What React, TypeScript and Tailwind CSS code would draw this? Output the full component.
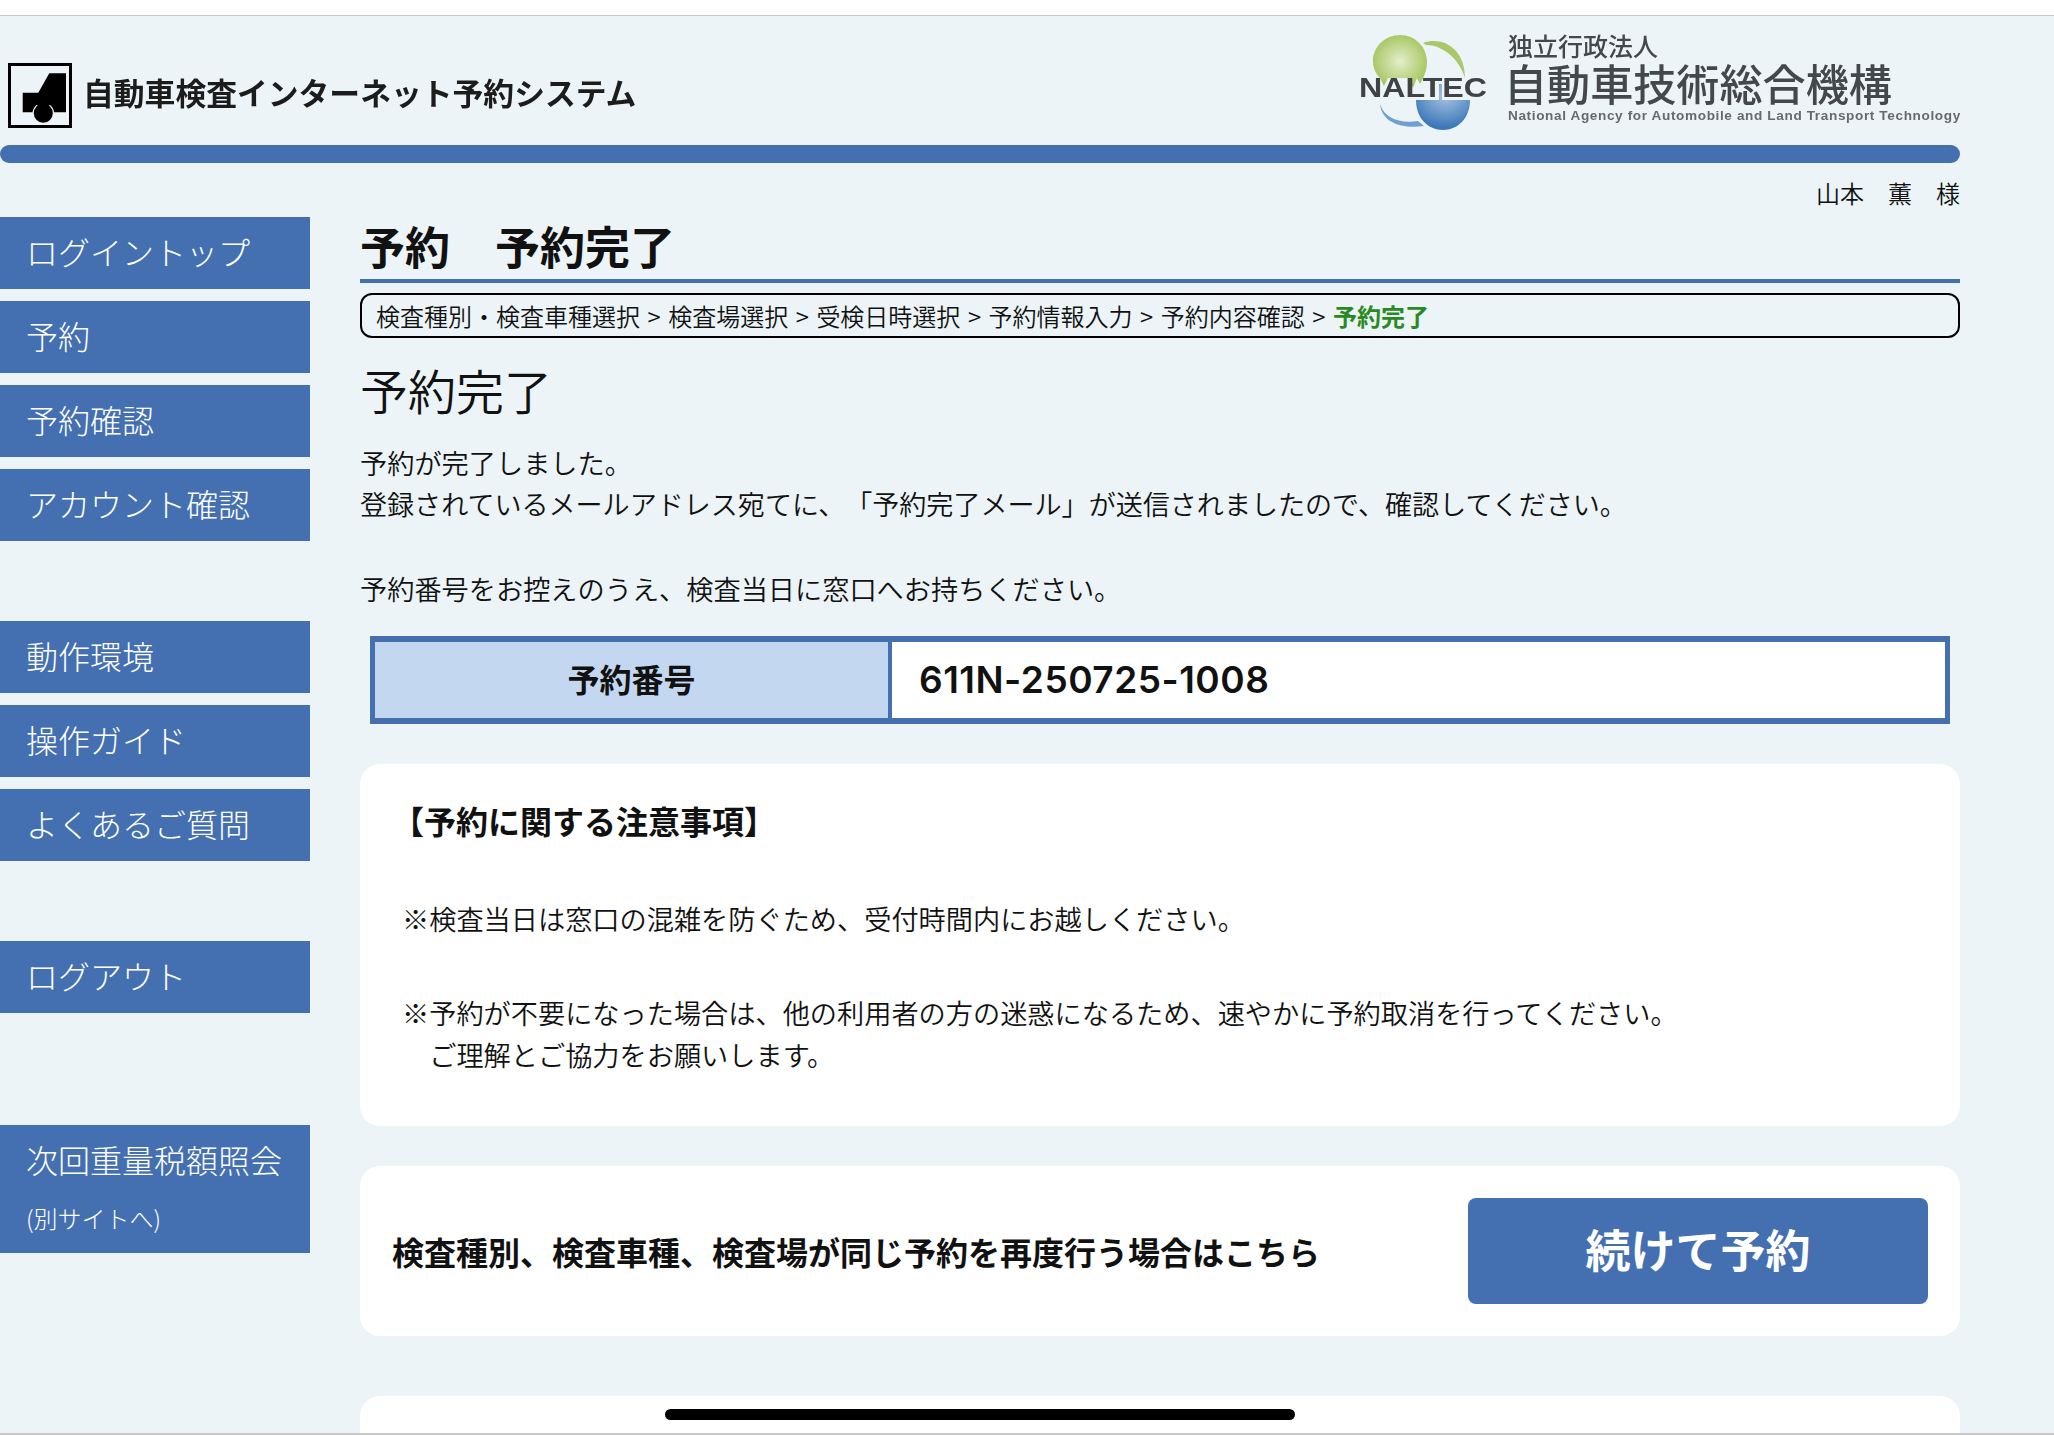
const navGroups = [
  { className: "", items: ["ログイントップ", "予約", "予約確認", "アカウント確認"] },
  { className: "mt-[80px]", items: ["動作環境", "操作ガイド", "よくあるご質問"] },
  { className: "mt-[80px]", items: ["ログアウト"] },
];

function TruckIcon() {
  return (
    <div className="h-[65px] w-[64px] shrink-0 border-[3px] border-black">
      <svg viewBox="0 0 58 59" className="h-[59px] w-[58px]">
        <path d="M38.3 7.3H55V46.3H11.7V26.7H27.3Z" fill="#000" />
        <circle cx="32.3" cy="47.3" r="10.8" fill="#ecf4f7" />
        <circle cx="32.3" cy="47.3" r="9.5" fill="#000" />
        <path d="M25 38L32.3 35L39.6 38L36 42H28.6Z" fill="#000" />
      </svg>
    </div>
  );
}

function NaltecLogo() {
  return (
    <svg viewBox="0 0 150 110" className="h-[110px] w-[150px] shrink-0 blur-[0.5px]">
      <defs>
        <radialGradient id="green" cx="50%" cy="50%" r="55%">
          <stop offset="0%" stopColor="#e4eecb" />
          <stop offset="100%" stopColor="#a3c45c" />
        </radialGradient>
        <radialGradient id="blue" cx="55%" cy="25%" r="70%">
          <stop offset="0%" stopColor="#a9c3e3" />
          <stop offset="100%" stopColor="#3b77b8" />
        </radialGradient>
      </defs>
      <path d="M50 7C65 7 77 19 77 34C77 44 73 50 70 56L67 50L63 60L58 50H38L34 58L30 50C26 46 23 40 23 33C23 19 35 7 50 7Z" fill="url(#green)" />
      <path d="M73 15C92 8 115 20 115 50C109 30 92 17 76 17Z" fill="#a9c869" />
      <path d="M66 72H120C120 90 108 102 93 102C78 102 66 90 66 72ZM89 56H92V72H89Z" fill="url(#blue)" />
      <path d="M30 76C34 90 50 96 68 93L74 98C54 101 32 96 30 76Z" fill="#6f9fd0" />
      <text x="9" y="69" fontFamily="Liberation Sans, sans-serif" fontWeight="700" fontSize="28" fill="#3f4346" textLength="128" lengthAdjust="spacingAndGlyphs">NALTEC</text>
    </svg>
  );
}

function Header() {
  return (
    <div className="flex h-[129px] w-[1960px] justify-between">
      <div className="mt-[47px] flex h-[65px] items-center pl-2">
        <TruckIcon />
        <div className="mb-[7px] ml-[11px] text-[30.8px] leading-[40px] font-bold whitespace-nowrap text-[#1c1c1c] blur-[0.3px]">
          自動車検査インターネット予約システム
        </div>
      </div>
      <div className="mt-[12px] flex">
        <NaltecLogo />
        <div className="ml-[8px] flex w-[452px] flex-col text-[#45484a] blur-[0.5px]">
          <div className="mt-[3px] text-[25px] leading-[28px] font-medium">独立行政法人</div>
          <div className="mt-[-1px] -ml-[4px] text-[43.1px] leading-[48px] font-medium whitespace-nowrap">自動車技術総合機構</div>
          <div className="mt-[2px] text-[13.6px] leading-[16px] font-bold tracking-[0.62px] whitespace-nowrap text-[#666a6d] font-['Liberation_Sans',sans-serif]">
            National Agency for Automobile and Land Transport Technology
          </div>
        </div>
      </div>
    </div>
  );
}

function NavItem({ label }: { label: string }) {
  return (
    <div className="flex h-[72px] items-center bg-[#4470b1] pb-[5px] pl-[26px] text-[32px] font-light text-white">
      {label}
    </div>
  );
}

function Sidebar() {
  return (
    <div className="mt-[54px] w-[310px] shrink-0">
      {navGroups.map((group, i) => (
        <div key={i} className={`flex flex-col gap-[12px] ${group.className}`}>
          {group.items.map((item) => (
            <NavItem key={item} label={item} />
          ))}
        </div>
      ))}
      <div className="mt-[112px] flex h-[128px] flex-col bg-[#4470b1] pl-[26px] font-light text-white">
        <div className="mt-[12px] text-[32px] leading-[44px]">次回重量税額照会</div>
        <div className="mt-[20px] text-[24px] leading-[34px]">(別サイトへ)</div>
      </div>
    </div>
  );
}

const steps = ["検査種別・検査車種選択", "検査場選択", "受検日時選択", "予約情報入力", "予約内容確認"];

function Main() {
  return (
    <div className="ml-[50px] w-[1600px] shrink-0">
      <div className="mt-[15px] mb-[1px] text-right text-[24px] leading-[30px] font-[350]">山本　薫　様</div>
      <h1 className="border-b-4 border-[#4470b1] pt-[15px] pb-[11px] text-[45px] leading-[44px] font-bold">
        予約　予約完了
      </h1>
      <div className="mt-[10px] flex h-[45px] items-center rounded-[12px] border-2 border-black px-[14px] text-[24px] font-[350] whitespace-nowrap">
        {steps.map((step) => (
          <span key={step} className="flex">
            {step}
            <span className="w-[28.2px] text-center">&gt;</span>
          </span>
        ))}
        <span className="font-bold text-[#2a8a1f]">予約完了</span>
      </div>
      <h2 className="mt-[19px] text-[48px] leading-[64px] font-[350]">予約完了</h2>
      <div className="mt-[20px] text-[27.2px] leading-[42px] font-[350]">
        <p>予約が完了しました。</p>
        <p className="text-[27.05px]">登録されているメールアドレス宛てに、「予約完了メール」が送信されましたので、確認してください。</p>
        <p className="mt-[42px]">予約番号をお控えのうえ、検査当日に窓口へお持ちください。</p>
      </div>

      <div className="mx-[10px] mt-[27px] flex h-[88px] border-x-[5px] border-y-[6px] border-[#4470b1] bg-white">
        <div className="flex w-[513px] items-center justify-center bg-[#c3d8f0] pb-[4px] text-[32px] font-bold">予約番号</div>
        <div className="w-[4px] bg-[#4470b1]" />
        <div className="flex flex-1 items-center pl-[27px] font-['Inter',sans-serif] text-[37px] font-semibold tracking-[0.5px]">
          611N-250725-1008
        </div>
      </div>

      <div className="mt-[40px] h-[362px] rounded-[20px] bg-white pt-[36px]">
        <div className="pl-[32px] text-[32px] leading-[40px] font-bold">【予約に関する注意事項】</div>
        <div className="mt-[57px] pl-[42px] text-[27.2px] leading-[42px] font-[350]">
          <p>※検査当日は窓口の混雑を防ぐため、受付時間内にお越しください。</p>
          <p className="mt-[52px]">※予約が不要になった場合は、他の利用者の方の迷惑になるため、速やかに予約取消を行ってください。</p>
          <p>　ご理解とご協力をお願いします。</p>
        </div>
      </div>

      <div className="mt-[40px] flex h-[170px] items-center justify-between rounded-[20px] bg-white pr-[32px] pl-[32px]">
        <div className="text-[32px] font-bold">検査種別、検査車種、検査場が同じ予約を再度行う場合はこちら</div>
        <button className="h-[106px] w-[460px] rounded-[8px] bg-[#4470b1] pb-[5px] text-[45px] font-bold text-white">続けて予約</button>
      </div>

      <div className="mt-[60px] h-[60px] rounded-t-[20px] bg-white" />
    </div>
  );
}

export default function App() {
  return (
    <div className="relative h-[1435px] w-[2054px] overflow-hidden bg-[#ecf4f7] font-['Noto_Sans_CJK_JP',sans-serif] text-[#111] [text-spacing-trim:space-all]">
      <div className="h-[16px] border-b border-[#c8c8c8] bg-white" />
      <Header />
      <div className="h-[18px] w-[1960px] rounded-full bg-[#4470b1]" />
      <div className="flex">
        <Sidebar />
        <Main />
      </div>
      {/* home indicator + screen edge */}
      <div className="absolute bottom-[15px] left-[665px] h-[11px] w-[630px] rounded-full bg-black" />
      <div className="absolute bottom-0 left-0 h-[2px] w-full bg-[#c8c8c8]" />
    </div>
  );
}
